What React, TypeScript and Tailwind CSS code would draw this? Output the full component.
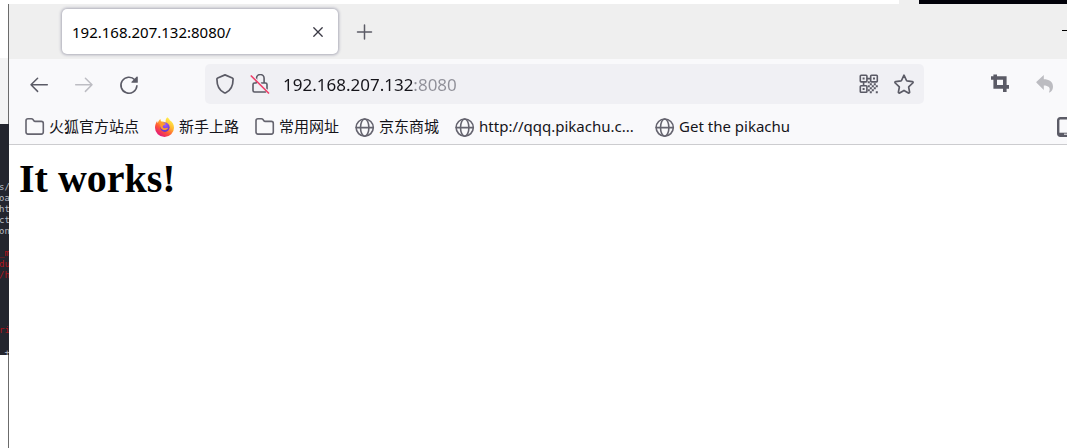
import React from "react";

const stroke = {
  fill: "none",
  stroke: "currentColor",
  strokeWidth: 1.6,
  strokeLinecap: "round" as const,
  strokeLinejoin: "round" as const,
};

function Icon({ children, className = "" }: { children: React.ReactNode; className?: string }) {
  return (
    <svg viewBox="0 0 20 20" aria-hidden="true" className={`size-5 shrink-0 ${className}`}>
      {children}
    </svg>
  );
}

const BackIcon = () => (
  <Icon>
    <path {...stroke} strokeWidth={1.5} d="M18.3 9.8H2M8.6 3.2L2 9.8l6.6 6.6" />
  </Icon>
);

const ForwardIcon = () => (
  <Icon>
    <path {...stroke} strokeWidth={1.5} d="M1.7 9.8H18M11.4 3.2L18 9.8l-6.6 6.6" />
  </Icon>
);

const ReloadIcon = () => (
  <Icon>
    <path {...stroke} d="M15.8 4.8A8 8 0 1 0 17.9 10.8" />
    <path fill="currentColor" d="M18.8 2v5.2a.6.6 0 0 1-.6.6H13c-.5 0-.8-.6-.4-1l5.200-5.200c.4-.4 1-.1 1 .4z" />
  </Icon>
);

const ShieldIcon = () => (
  <Icon>
    <path {...stroke} strokeWidth={1.7} d="M10 .9l7.300 3.100c.5.2.8.6.8 1.100 0 6-2 11.300-7.300 13.700a2 2 0 0 1-1.600 0C3.900 16.400 1.900 11.100 1.900 5.100c0-.5.3-.9.8-1.100z" />
  </Icon>
);

const InsecureLockIcon = () => (
  <Icon>
    <path {...stroke} d="M6.500 8.800V4.300a3.800 3.800 0 0 1 7.600 0v4.500M6 9H4.500A1.500 1.500 0 0 0 3 10.500v6A1.500 1.500 0 0 0 4.500 18h11M11.500 9h4a1.500 1.500 0 0 1 1.500 1.500v4.500" />
    <path d="M2 1.700l17 17" stroke="#efeef3" strokeWidth="2" />
    <path d="M1.300 2l17.200 17" stroke="#f0406b" strokeWidth="1.700" strokeLinecap="round" />
  </Icon>
);

const FolderIcon = () => (
  <Icon className="text-[#65646f]">
    <path {...stroke} d="M1 3.700C1 2.600 1.900 1.800 3 1.800h3.400c.6 0 1.200.3 1.600.8l1 1.300c.3.3.6.5 1 .5h6.300c1.100 0 2 .9 2 2v8.700c0 1.100-.9 2-2 2H3c-1.100 0-2-.9-2-2z" />
  </Icon>
);

const GlobeIcon = () => (
  <Icon className="text-[#65646f]">
    <g {...stroke}>
      <circle cx="9.700" cy="10.600" r="8.600" />
      <ellipse cx="9.700" cy="10.600" rx="4.200" ry="8.600" />
      <path d="M1.200 10.600h17" />
    </g>
  </Icon>
);

const FirefoxIcon = () => (
  <Icon>
    <defs>
      <linearGradient id="flame" x1="0.85" y1="0.1" x2="0.25" y2="0.95">
        <stop offset="0" stopColor="#fff44f" />
        <stop offset="0.35" stopColor="#ffb52e" />
        <stop offset="0.65" stopColor="#ff5a36" />
        <stop offset="1" stopColor="#e3167b" />
      </linearGradient>
      <radialGradient id="core" cx="0.55" cy="0.25" r="0.8">
        <stop offset="0" stopColor="#9b59ff" />
        <stop offset="1" stopColor="#5b2fc9" />
      </radialGradient>
    </defs>
    <path fill="url(#flame)" d="M12.300.3c1.300 1 2.200 2 2.700 3.300 2.600 1.400 4 4.100 4 7.100a9.500 9.300 0 0 1-19 0c0-2.600.8-4.900 2.100-6.800.1 1 .4 1.600.8 2 .4-1.700 1.300-3 2.500-3.900 0 1 .4 1.900 1 2.500 1.500-.1 3 .1 4.300.7C10.300 3.300 11 1.500 12.300.3z" />
    <circle cx="9.900" cy="10.300" r="4.700" fill="url(#core)" />
    <path fill="#ff9a2c" d="M3.200 5.500c1.500-.7 3.200-.7 4.500.3 1 .5 2.300.4 3 .8-.3 1.500-2.500 1.600-3 2.600-.2 1.100.9 2.100 2.300 2 1.300 0 2-.9 3-.3-.8 1.900-3.500 2.700-5.500 1.600C5.400 11.400 5 9.200 5.200 7.500z" />
  </Icon>
);

const QrIcon = () => (
  <Icon>
    <g fill="none" stroke="currentColor" strokeWidth="1.600">
      <rect x="1.300" y="1.300" width="6.600" height="6.600" rx=".8" />
      <rect x="11.700" y="1.300" width="6.600" height="6.600" rx=".8" />
      <rect x="1.300" y="11.700" width="6.600" height="6.600" rx=".8" />
    </g>
    <path
      fill="currentColor"
      d="M3.600 3.600h2v2h-2zM14 3.600h2v2h-2zM3.600 14h2v2h-2zM8 3.800h3.700v1.600H8zM3.800 8h1.600v3.700H3.800zM8.800 7.200h2v2h-2zM10.800 9.200h2v2h-2zM14.800 9.200h2v2h-2zM8.800 11.200h2v2h-2zM12.800 11.200h2v2h-2zM16.800 11.200h2v2h-2zM10.800 13.200h2v2h-2zM14.800 13.200h2v2h-2zM8.800 15.200h2v2h-2zM12.800 15.200h2v2h-2zM10.800 17.200h2v2h-2zM16.800 17.200h2v2h-2z"
    />
  </Icon>
);

const StarIcon = () => (
  <Icon>
    <path {...stroke} strokeWidth={1.700} d="M10 1.200l2.500 5.300a.7.700 0 0 0 .5.400l5.300.7c.7.100 1 .9.500 1.400l-3.900 3.700a.7.700 0 0 0-.2.600l.9 4.800c.1.700-.6 1.200-1.200.9L10 16.400 5.600 19c-.6.300-1.300-.2-1.200-.9l.9-4.800a.7.700 0 0 0-.2-.6L1.200 9c-.5-.5-.2-1.300.5-1.400L7 6.900a.7.700 0 0 0 .5-.4z" />
  </Icon>
);

const CropIcon = () => (
  <Icon>
    <path fill="none" stroke="currentColor" strokeWidth="3.600" d="M5.200.5v12.400H19M1 4h13.800v14" />
  </Icon>
);

const UndoIcon = () => (
  <Icon>
    <path fill="currentColor" d="M8.800 1v4.300c5 0 9.200 2.200 9.200 7.400 0 2.600-1.200 4.500-3.400 5.800-.4.200-.7-.1-.5-.5 1.900-4.600-.8-6.400-5.300-6.500V16L1.500 8.700c-.3-.3-.3-.6 0-.9z" />
  </Icon>
);

const TabletIcon = () => (
  <Icon>
    <rect x="1.200" y="1.200" width="17.600" height="17.600" rx="2" fill="none" stroke="currentColor" strokeWidth="2.400" />
    <path d="M2 17.200h16" stroke="currentColor" strokeWidth="3" />
    <path d="M7 17.200h3" stroke="#f9f9fb" strokeWidth="1" />
  </Icon>
);

const bookmarks = [
  { label: "火狐官方站点", icon: <FolderIcon /> },
  { label: "新手上路", icon: <FirefoxIcon /> },
  { label: "常用网址", icon: <FolderIcon /> },
  { label: "京东商城", icon: <GlobeIcon /> },
  { label: "http://qqq.pikachu.c...", icon: <GlobeIcon />, wide: true },
  { label: "Get the pikachu", icon: <GlobeIcon /> },
];

const terminal = [
  { text: "s/" },
  { text: "oa" },
  { text: "ht" },
  { text: "ct" },
  { text: "on" },
  { text: "" },
  { text: "_m", red: true },
  { text: "du", red: true },
  { text: "/h", red: true },
  { text: "" },
  { text: "" },
  { text: "" },
  { text: "" },
  { text: "ri", red: true },
  { text: "" },
  { text: " +" },
];

function Backdrop() {
  return (
    <aside className="flex w-[9px] shrink-0 flex-col overflow-hidden">
      <div className="h-[54px] shrink-0 border-r border-[#6b6b6b] bg-white" />
      <div className="h-[66px] shrink-0 border-r border-[#6b6b6b] bg-[#f4f4f4]" />
      <div className="h-[231px] shrink-0 overflow-hidden bg-[#23252e] pt-[58px] font-['DejaVu_Sans_Mono',monospace] text-[9px] leading-[11px] whitespace-pre">
        {terminal.map((line, i) => (
          <div key={i} className={line.red ? "-ml-px h-[11px] text-[#b3141b]" : "-ml-px h-[11px] text-[#b9bcc4]"}>
            {line.text}
          </div>
        ))}
      </div>
      <div className="flex-1 border-r border-[#6b6b6b] bg-white" />
    </aside>
  );
}

export default function App() {
  return (
    <div className="flex h-screen flex-col overflow-hidden bg-white font-['Noto_Sans','Noto_Sans_CJK_SC',sans-serif] text-[#15141a]">
      <div className="flex h-1 shrink-0 justify-end">
        <div className="w-5 bg-[#efefef]" />
        <div className="w-[148px] bg-[#02020a]" />
      </div>
      <div className="flex min-h-0 flex-1">
        <Backdrop />
        <div className="flex min-w-0 flex-1 flex-col overflow-hidden">
          <header className="shrink-0 border-b border-[#cccccf] bg-[#f9f9fb]">
            <div className="flex h-[55px] items-center bg-[#efefef] pl-[53px]">
              <div className="flex h-[45px] w-[276px] items-center justify-between rounded-[5px] bg-white px-[10px] shadow-[0_0_3px_1px_#acacb9]">
                <button type="button" className="text-[15px] leading-5 text-black">
                  192.168.207.132:8080/
                </button>
                <button type="button" aria-label="Close tab" className="text-[#3a3944]">
                  <Icon>
                    <path {...stroke} strokeWidth={1.300} d="M5.800 5.800l8.400 8.400M14.200 5.800l-8.400 8.400" />
                  </Icon>
                </button>
              </div>
              <button type="button" aria-label="New tab" className="ml-4 text-[#5b5b66]">
                <Icon>
                  <path {...stroke} strokeWidth={1.500} d="M10.500 3v14M3.500 10h14" />
                </Icon>
              </button>
              <button type="button" aria-label="Minimize" className="mb-[3px] ml-auto h-5 w-[5px] text-black">
                <span className="block h-px bg-black" />
              </button>
            </div>
            <div className="flex h-[50px] items-center pl-5 text-[#5b5b66]">
              <nav className="flex gap-[25px] pt-px">
                <button type="button" aria-label="Back"><BackIcon /></button>
                <button type="button" aria-label="Forward" disabled className="text-[#bdbdc3]"><ForwardIcon /></button>
                <button type="button" aria-label="Reload"><ReloadIcon /></button>
              </nav>
              <div className="ml-[66px] flex h-10 min-w-0 flex-1 items-center rounded-[5px] bg-[#f0f0f4] px-[10px]">
                <button type="button" aria-label="Tracking protection"><ShieldIcon /></button>
                <button type="button" aria-label="Connection not secure" className="ml-[15px]"><InsecureLockIcon /></button>
                <input
                  aria-label="Address"
                  defaultValue="192.168.207.132:8080"
                  className="ml-[13px] min-w-0 flex-1 bg-[linear-gradient(90deg,#15141a_130px,#8f8f98_130px)] bg-clip-text pt-[2px] text-[17px] leading-6 text-transparent outline-none"
                />
                <button type="button" aria-label="QR code"><QrIcon /></button>
                <button type="button" aria-label="Bookmark this page" className="ml-[15px]"><StarIcon /></button>
              </div>
              <div className="ml-[66px] flex gap-[25px] pr-3">
                <button type="button" aria-label="Screenshot"><CropIcon /></button>
                <button type="button" aria-label="Undo" className="text-[#bcbcc1]"><UndoIcon /></button>
              </div>
            </div>
            <div className="flex h-[35px] items-center pl-4">
              <nav className="flex gap-4">
                {bookmarks.map((b) => (
                  <a
                    key={b.label}
                    href="#"
                    className={
                      b.wide
                        ? "flex w-[184px] items-start gap-1 text-[15px] leading-[18px] whitespace-nowrap"
                        : "flex items-start gap-1 text-[15px] leading-[18px] whitespace-nowrap"
                    }
                  >
                    {b.icon}
                    <span>{b.label}</span>
                  </a>
                ))}
              </nav>
              <div className="ml-auto w-[10px] overflow-hidden text-[#5b5b66]">
                <button type="button" aria-label="Mobile bookmarks" className="block"><TabletIcon /></button>
              </div>
            </div>
          </header>
          <main className="flex-1 bg-white px-[10px] pt-[10px] font-['Liberation_Serif',serif] text-black">
            <h1 className="text-[40px] leading-[48px] font-bold">It works!</h1>
          </main>
        </div>
      </div>
    </div>
  );
}
